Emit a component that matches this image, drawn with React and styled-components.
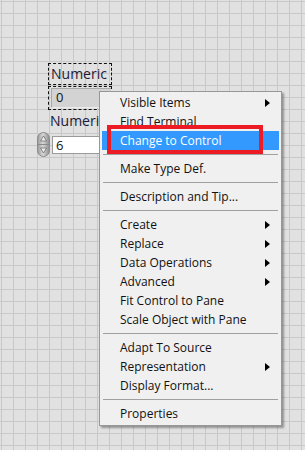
import React from 'react';
import styled, { createGlobalStyle } from 'styled-components';

const GlobalStyle = createGlobalStyle`
    html, body {
        margin: 0;
        padding: 0;
        overflow: hidden;
    }
`;

const menuItems = [
    { label: 'Visible Items', sub: true },
    { label: 'Find Terminal' },
    { label: 'Change to Control', active: true },
    { sep: true },
    { label: 'Make Type Def.' },
    { sep: true },
    { label: 'Description and Tip...' },
    { sep: true },
    { label: 'Create', sub: true },
    { label: 'Replace', sub: true },
    { label: 'Data Operations', sub: true },
    { label: 'Advanced', sub: true },
    { label: 'Fit Control to Pane' },
    { label: 'Scale Object with Pane' },
    { sep: true },
    { label: 'Adapt To Source' },
    { label: 'Representation', sub: true },
    { label: 'Display Format...' },
    { sep: true },
    { label: 'Properties' },
];

function Incrementer() {
    return (
        <Spinner>
            <svg width='13' height='25' viewBox='0 0 13 25'>
                <defs>
                    <linearGradient id='spinGrad' x1='0' x2='1' y1='0' y2='0'>
                        <stop offset='0' stopColor='#9a9a9a' />
                        <stop offset='0.45' stopColor='#d8d8d8' />
                        <stop offset='1' stopColor='#8c8c8c' />
                    </linearGradient>
                </defs>
                <rect x='0.5' y='0.5' width='12' height='24' rx='6' fill='url(#spinGrad)' stroke='#8a8a8a' />
                <line x1='1' y1='12.5' x2='12' y2='12.5' stroke='#8a8a8a' />
                <path d='M6.5 4 L9.5 9 L3.5 9 Z' fill='#eeeeee' stroke='#6e6e6e' strokeWidth='0.8' />
                <path d='M6.5 21 L9.5 16 L3.5 16 Z' fill='#eeeeee' stroke='#6e6e6e' strokeWidth='0.8' />
            </svg>
        </Spinner>
    );
}

function App() {
    return (
        <>
            <GlobalStyle />
            <Canvas>
                <LabelBox>Numeric</LabelBox>
                <IndicatorFrame>
                    <IndicatorDisplay>0</IndicatorDisplay>
                </IndicatorFrame>
                <ControlLabel>Numeric</ControlLabel>
                <ControlRow>
                    <Incrementer />
                    <NumInput>6</NumInput>
                </ControlRow>

                <Menu>
                    {menuItems.map((item, i) =>
                        item.sep ? (
                            <Separator key={i} />
                        ) : (
                            <MenuItem key={i} $active={item.active}>
                                <span>{item.label}</span>
                                {item.sub && <Arrow />}
                            </MenuItem>
                        )
                    )}
                </Menu>
                <Callout />
            </Canvas>
        </>
    );
}

export default App;

const Canvas = styled.div`
    position: relative;
    width: 305px;
    height: 450px;
    overflow: hidden;
    background-color: #e1e1e1;
    background-image: linear-gradient(to right, #c8c8c8 1px, transparent 1px),
        linear-gradient(to bottom, #c8c8c8 1px, transparent 1px);
    background-size: 12px 12px;
    background-position: 1px 1px;
    font-family: 'Open Sans', 'Noto Sans', sans-serif;
    color: #111;
`;

const LabelBox = styled.div`
    position: absolute;
    left: 48px;
    top: 63px;
    width: 60px;
    height: 20px;
    border: 1px dashed #111;
    font-size: 14px;
    line-height: 20px;
    padding-left: 2px;
    box-sizing: content-box;
    color: #1a1a3a;
`;

const IndicatorFrame = styled.div`
    position: absolute;
    left: 48px;
    top: 86px;
    width: 60px;
    height: 20px;
    border: 1px dashed #111;
    padding: 1px 0 1px 2px;
    box-sizing: content-box;
    display: flex;
`;

const IndicatorDisplay = styled.div`
    flex: 1;
    background: #d3d3d3;
    border-top: 1px solid #a8a8a8;
    border-left: 1px solid #a8a8a8;
    border-bottom: 1px solid #ececec;
    padding-left: 4px;
    font-size: 13px;
    line-height: 17px;
`;

const ControlLabel = styled.div`
    position: absolute;
    left: 50px;
    top: 111px;
    font-size: 14px;
    line-height: 20px;
    color: #1a1a3a;
`;

const ControlRow = styled.div`
    position: absolute;
    left: 37px;
    top: 132px;
    display: flex;
    align-items: center;
    gap: 2px;
`;

const Spinner = styled.div`
    width: 13px;
    height: 25px;
    display: flex;
`;

const NumInput = styled.div`
    width: 56px;
    height: 16px;
    background: #fff;
    border: 1px solid #9a9a9a;
    padding-left: 3px;
    font-size: 13px;
    line-height: 16px;
`;

const Menu = styled.div`
    position: absolute;
    left: 99px;
    top: 91px;
    width: 177px;
    padding: 1px 2px 2px;
    background: #f0f0f0;
    border: 1px solid #979797;
    box-shadow: 2px 2px 2px rgba(0, 0, 0, 0.35);
    display: flex;
    flex-direction: column;
`;

const MenuItem = styled.div`
    height: 19px;
    display: flex;
    align-items: center;
    justify-content: space-between;
    padding: 0 9px 0 18px;
    font-size: 12px;
    line-height: 19px;
    color: ${p => (p.$active ? '#fff' : '#111')};
    background: ${p => (p.$active ? '#3399ff' : 'transparent')};
`;

const Arrow = styled.span`
    width: 0;
    height: 0;
    border-left: 5px solid #000;
    border-top: 4px solid transparent;
    border-bottom: 4px solid transparent;
`;

const Separator = styled.div`
    height: 1px;
    margin: 4px 1px 4px 1px;
    background: #a0a0a0;
`;

const Callout = styled.div`
    position: absolute;
    left: 107px;
    top: 125px;
    width: 148px;
    height: 21px;
    border: 4px solid #ed1c24;
`;
